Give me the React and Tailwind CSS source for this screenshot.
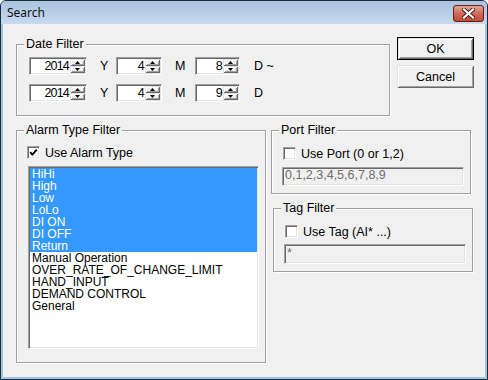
import React from 'react';

const sunken =
  'border border-t-[#a0a0a0] border-l-[#a0a0a0] border-r-white border-b-white shadow-[inset_1px_1px_0_#696969,inset_-1px_-1px_0_#e3e3e3]';
const raised =
  'bg-[#f0f0f0] shadow-[inset_1px_1px_0_#e3e3e3,inset_-1px_-1px_0_#696969,inset_2px_2px_0_#fff,inset_-2px_-2px_0_#a0a0a0]';

const Group = ({ label, className, children }) => (
  <div
    className={`relative border border-[#a0a0a0] shadow-[inset_1px_1px_0_#fff,1px_1px_0_#fff] ${className}`}
  >
    <span className="absolute left-[7px] -top-[8px] px-[2px] leading-[14px] bg-[#f0f0f0]">{label}</span>
    {children}
  </div>
);

const Arrow = ({ down }) => (
  <svg width="5" height="3" viewBox="0 0 5 3" className="block">
    {down ? <polygon points="0,0 5,0 2.5,3" fill="#000" /> : <polygon points="2.5,0 5,3 0,3" fill="#000" />}
  </svg>
);

const Spin = ({ value, width }) => (
  <div className={`flex h-[18px] bg-white p-[1px] ${sunken} ${width}`}>
    <div className="flex-1 text-right pr-[1px] leading-[14px] tracking-[-0.8px]">{value}</div>
    <div className="w-[15px] flex flex-col">
      <div className={`flex-1 flex items-center justify-center ${raised}`}>
        <Arrow />
      </div>
      <div className={`flex-1 flex items-center justify-center ${raised}`}>
        <Arrow down />
      </div>
    </div>
  </div>
);

const Check = ({ checked, label, className = '' }) => (
  <div className={`flex items-center h-[13px] ${className}`}>
    <div className={`w-[13px] h-[13px] bg-white flex items-center justify-center ${sunken}`}>
      {checked && (
        <svg width="9" height="9" viewBox="0 0 9 9">
          <polyline points="1.2,4.2 3.4,6.6 7.8,1.6" fill="none" stroke="#000" strokeWidth="1.9" />
        </svg>
      )}
    </div>
    <span className="ml-[5px] leading-[14px]">{label}</span>
  </div>
);

const selected = ['HiHi', 'High', 'Low', 'LoLo', 'DI ON', 'DI OFF', 'Return'];
const others = ['Manual Operation', 'OVER_RATE_OF_CHANGE_LIMIT', 'HAND_INPUT', 'DEMAND CONTROL', 'General'];

const Btn = ({ children, isDefault }) => (
  <button
    className={`w-[77px] h-[23px] flex items-center justify-center leading-[14px] ${
      isDefault ? 'border border-black' : ''
    } ${raised}`}
  >
    {children}
  </button>
);

export default function App() {
  return (
    <div className="w-[488px] h-[380px] bg-white font-['Liberation_Sans',Arial,sans-serif] text-[12.5px] text-black">
      <div className="w-full h-full flex flex-col border border-[#1d2b3c] rounded-t-[6px] overflow-hidden bg-[#9fc4e6]">
        <div className="h-[23px] shrink-0 flex items-center pl-[6px] pr-[3px] bg-gradient-to-b from-[#aac3df] to-[#c6daf0]">
          <span className="font-['Noto_Sans',sans-serif] text-[12px] text-[#111]">Search</span>
          <div className="ml-auto mt-[2px] w-[31px] h-[17px] rounded-[3px] border border-[#6b1d12] bg-gradient-to-b from-[#e3a496] via-[#cf6a58] to-[#bf4a37] flex items-center justify-center">
            <svg width="13" height="11" viewBox="0 0 13 11">
              <path d="M2 1.5 L11 9.5 M11 1.5 L2 9.5" stroke="#4a1a14" strokeWidth="4" strokeLinecap="square" />
              <path d="M2 1.5 L11 9.5 M11 1.5 L2 9.5" stroke="#fff" strokeWidth="2.2" strokeLinecap="square" />
            </svg>
          </div>
        </div>
        <div className="flex-1 mx-[2px] mb-[2px] bg-[#f0f0f0] pl-[13px] pt-[13px]">
          <div className="flex items-start">
            <Group label="Date Filter" className="mt-[7px] w-[374px] h-[72px] pl-[12px] pt-[12px]">
              <div className="flex flex-col gap-[8px]">
                {[['2014', '4', '8', 'D ~'], ['2014', '4', '9', 'D']].map((r, i) => (
                  <div key={i} className="flex items-center">
                    <Spin value={r[0]} width="w-[58px]" />
                    <span className="w-[29px] pl-[13px]">Y</span>
                    <Spin value={r[1]} width="w-[46px]" />
                    <span className="w-[33px] pl-[13px]">M</span>
                    <Spin value={r[2]} width="w-[45px]" />
                    <span className="pl-[14px]">{r[3]}</span>
                  </div>
                ))}
              </div>
            </Group>
            <div className="ml-[7px] flex flex-col gap-[5px]">
              <Btn isDefault>OK</Btn>
              <Btn>Cancel</Btn>
            </div>
          </div>
          <div className="flex items-start mt-[14px]">
            <Group label="Alarm Type Filter" className="w-[250px] h-[233px] pl-[10px] pt-[15px]">
              <Check checked label="Use Alarm Type" />
              <div className={`mt-[7px] ml-[1px] w-[231px] h-[183px] bg-white p-[1px] text-[12px] ${sunken}`}>
                {selected.map((t) => (
                  <div key={t} className="h-[12px] leading-[12px] pl-[2px] bg-[#3399ff] text-white whitespace-nowrap">
                    {t}
                  </div>
                ))}
                {others.map((t) => (
                  <div key={t} className="h-[12px] leading-[12px] pl-[2px] whitespace-nowrap">
                    {t}
                  </div>
                ))}
              </div>
            </Group>
            <div className="ml-[5px] flex flex-col">
              <Group label="Port Filter" className="w-[200px] h-[64px] pl-[10px] pt-[16px]">
                <Check label="Use Port (0 or 1,2)" className="ml-[1px]" />
                <div className={`mt-[7px] w-[182px] h-[19px] px-[2px] leading-[15px] text-[#6d6d6d] ${sunken}`}>
                  0,1,2,3,4,5,6,7,8,9
                </div>
              </Group>
              <Group label="Tag Filter" className="ml-[2px] mt-[14px] w-[200px] h-[64px] pl-[10px] pt-[16px]">
                <Check label="Use Tag (AI* ...)" className="ml-[1px]" />
                <div className={`mt-[6px] w-[182px] h-[20px] px-[2px] leading-[16px] text-[#6d6d6d] ${sunken}`}>
                  *
                </div>
              </Group>
            </div>
          </div>
        </div>
      </div>
    </div>
  );
}
